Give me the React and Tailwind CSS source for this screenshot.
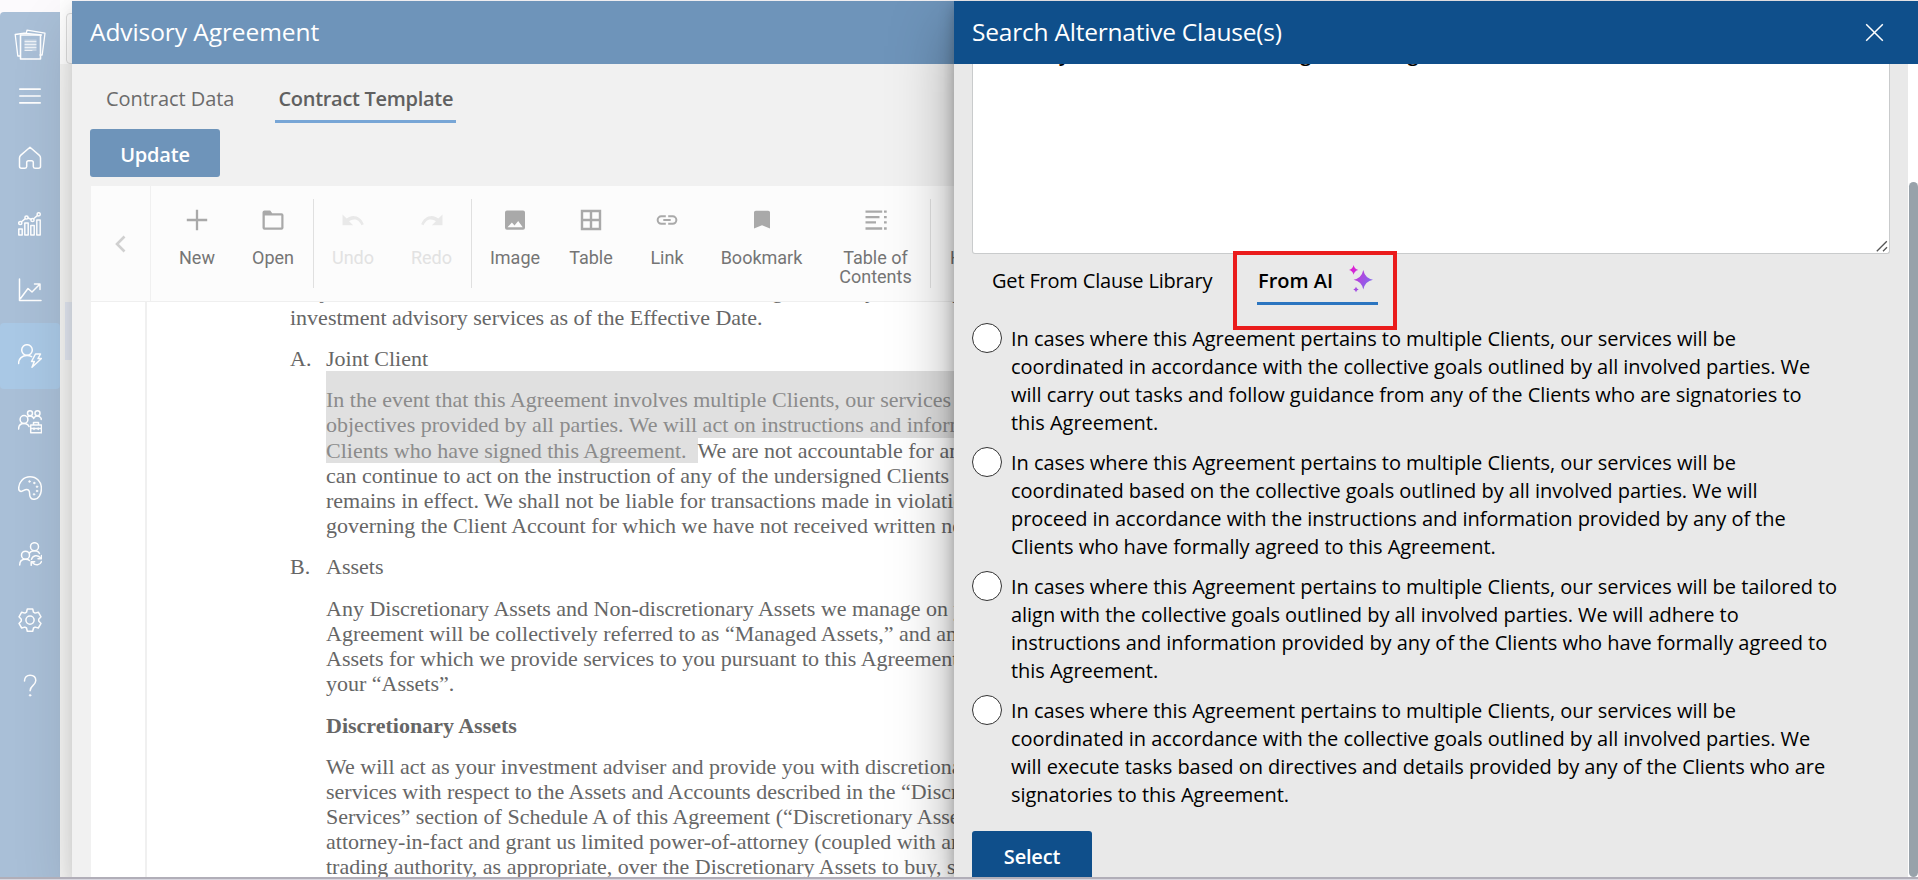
const stroke = { fill: 'none', stroke: 'currentColor', strokeLinecap: 'round', strokeLinejoin: 'round' };

function Ico({ children, size = 24, width = 1.5 }) {
  return (
    <svg width={size} height={size} viewBox="0 0 24 24" {...stroke} strokeWidth={width}>
      {children}
    </svg>
  );
}

const sideIcons = [
  <Ico key="home">
    <path d="M12 1.2 2.6 9.4Q1.5 10.4 1.5 12v8.3q0 2 2 2H7q1.700 0 1.700-1.700V16.500q0-1.800 1.800-1.800h3q1.800 0 1.800 1.800v4.100q0 1.700 1.700 1.700h3.500q2 0 2-2V12q0-1.600-1.100-2.600Z" />
  </Ico>,
  <Ico key="bars">
    <path d="M.8 23V17h3.400v6zM6.800 23V11h3.400v12zM12.800 23V13.500h3.400V23zM18.800 23V8h3.400v15z" />
    <circle cx="2.300" cy="11" r="1.600" />
    <circle cx="8.500" cy="5.500" r="1.600" />
    <circle cx="14.500" cy="8" r="1.600" />
    <circle cx="20.700" cy="2.300" r="1.600" />
    <path d="m3.500 9.800 3.800-3.200M10 6l3 1.300M15.600 6.800l4-3.400" />
  </Ico>,
  <Ico key="trend">
    <path d="M1.500 1v21.500H23M2.500 20.500l7.500-10 4 3.500 7.500-7.500M16.500 6h5.500v5.500" />
  </Ico>,
  <Ico key="bolt">
    <circle cx="9" cy="6" r="5.300" />
    <path d="M.6 19.500C.6 14.600 4.200 11.500 9 11.500q2.700 0 4.600 1.100" />
    <path d="M17.500 10h5l-2.500 4.500h3.500L14 23.300l2.300-5.800h-2.800z" />
  </Ico>,
  <Ico key="team">
    <circle cx="6" cy="9.500" r="3.900" />
    <circle cx="12" cy="3.300" r="2.500" />
    <circle cx="19.500" cy="3.300" r="2.500" />
    <path d="M.6 19c0-3.600 2-5.400 5.400-5.400 2.600 0 4.300 1 5 3M10 6.500q2-.9 4 0 1.300.8 1.700 2 .600-1.500 2-2.100 3.500-1.200 5.500 2v1.100" />
    <path d="M12.700 15h10.800v7.800H12.700zM15.500 15v-2.600h5V15M12.700 18.500h10.800M16 18v1.600M20.200 18v1.600" />
  </Ico>,
  <Ico key="palette">
    <path d="M12 .8C5.500.8.7 6 .7 12.500c0 2 1.100 2.900 2.500 2.900 2 0 3.200-1.900 5.300-1.900 2.300 0 3.100 1.700 3.100 4 0 3.300 1 5.800 4.400 5.800 4.600 0 7.400-5 7.400-10.800C23.400 5.600 18.500.8 12 .8z" />
    <g fill="currentColor" strokeWidth=".5">
      <circle cx="11.500" cy="5.500" r=".9" />
      <circle cx="16.300" cy="7" r=".9" />
      <circle cx="19" cy="10.700" r=".9" />
      <circle cx="19" cy="15" r=".9" />
      <circle cx="16" cy="18.300" r=".9" />
    </g>
  </Ico>,
  <Ico key="sync">
    <circle cx="16.500" cy="4.700" r="4" />
    <circle cx="7.500" cy="13.200" r="4" />
    <path d="M1.700 23c0-3.800 2-5.700 5.800-5.700 1.700 0 3 .300 4 1.200M11.500 11c.9-1.500 2.700-2.200 5-2.200 2.400 0 4.100.8 5 2.700M13.500 17.300c1.400-4 6-4.600 8.700-1.700M23.500 13.500v3.200h-3.500M23.500 19.500c-1.400 4-6 4.300-8.700 1.500M13.200 23.300v-3.500h3.500" />
  </Ico>,
  <Ico key="gear">
    <path d="M9.300 1h5.400l.8 3.200 1.600.9 3.200-.9 2.700 4.600-2.300 2.400v1.800l2.300 2.400-2.700 4.600-3.200-.9-1.600.9-.8 3.200H9.300l-.8-3.200-1.600-.9-3.200.9L1 15.400 3.300 13v-1.800L1 8.800l2.700-4.600 3.200.9 1.600-.9z" />
    <circle cx="12" cy="12.100" r="4.100" />
  </Ico>,
  <Ico key="help">
    <path d="M6.500 7c0-3.600 2.200-5.700 5.600-5.700s5.700 2.100 5.700 5.300c0 4.800-5.700 4.800-5.700 10.200" />
    <circle cx="12.100" cy="21.300" r=".9" fill="currentColor" strokeWidth=".6" />
  </Ico>,
];

function Sidebar() {
  return (
    <nav className="mt-3 flex w-[60px] shrink-0 flex-col items-center rounded-tl-sm bg-[#a9bfd7] text-white">
      <svg className="mt-[17px]" width="32" height="32" viewBox="0 0 32 32" {...stroke} strokeWidth="1.300">
        <path d="M6 27H3.800L1.200 5.500 12 4M26 26h2.200L31 4.200 13 1.200l-.6 3M12.400 4.300 27.500 6" />
        <rect x="6.500" y="6" width="20" height="24" strokeWidth="1.600" />
        <rect x="10.500" y="10.500" width="12" height="11.500" fill="#ffffff55" stroke="none" />
        <path d="M11 12.500h11M11 15.500h11M11 18.500h11M11 21.500h7" strokeWidth="1" opacity=".7" />
      </svg>
      <svg className="mt-[27px]" width="22" height="16" viewBox="0 0 22 16" {...stroke} strokeWidth="1.700">
        <path d="M.8 1.200h20.400M.8 8h20.400M.8 14.800h20.400" />
      </svg>
      <div className="mt-[20.500px] w-full">
        {sideIcons.map((icon, i) => (
          <div key={i} className={`flex h-[66px] w-full items-center justify-center ${i === 3 ? 'rounded bg-[#a9c8e5]' : ''}`}>
            {icon}
          </div>
        ))}
      </div>
    </nav>
  );
}

const icons = {
  New: <path d="M12 1.800v20.400M1.800 12h20.400" stroke="currentColor" strokeWidth="2.300" />,
  Open: (
    <path fillRule="evenodd" fill="currentColor" d="M3.500 2.500h5.700l2 2.800h9.300q2 0 2 2v12.400q0 2-2 2h-17q-2 0-2-2V4.500q0-2 2-2zM3.800 7.600v11.800h16.500V7.600z" />
  ),
  Undo: <path fill="currentColor" d="M1.500 6.500v10.700h10.600l-4-3.900c3.800-3 9.600-3 12.300 3.900l2.400-.9C20 8 11.500 5.400 5.700 10.500z" />,
  Redo: <path fill="currentColor" d="M22.500 6.500v10.700H11.900l4-3.900c-3.800-3-9.600-3-12.300 3.900l-2.400-.9C4 8 12.500 5.400 18.300 10.500z" />,
  Image: (
    <path fillRule="evenodd" fill="currentColor" d="M4 2.500h16q2 0 2 2v15.300q0 2-2 2H4q-2 0-2-2V4.500q0-2 2-2zM4.500 19.200h15.200L15.200 13l-3.700 4.600-2.600-3z" />
  ),
  Table: <path d="M3 3h18v18H3zM12 3v18M3 12h18" fill="none" stroke="currentColor" strokeWidth="2.400" />,
  Link: (
    <path fill="none" stroke="currentColor" strokeWidth="2" d="M10.800 8.300H6.400a3.700 3.700 0 0 0 0 7.500h4.400M13.200 8.300h4.400a3.700 3.700 0 0 1 0 7.500h-4.400M8.300 12h7.400" />
  ),
  Bookmark: <path fill="currentColor" d="M5.800 2.700h12.400q1.800 0 1.800 1.600v16.200l-8-3.300-8 3.300V4.300q0-1.600 1.800-1.600z" />,
  TOC: (
    <path d="M1.500 3.700h16.700M1.500 9.200h14M1.500 14.300h10.500M1.500 20.500h16.700M20 3.700h2.700M20 9.200h2.700M20 14.300h2.700M20 20.500h2.700" stroke="currentColor" strokeWidth="2.300" />
  ),
};

function Tool({ icon, label, className, disabled }) {
  return (
    <div className={`flex shrink-0 flex-col items-center pt-[22px] ${disabled ? 'text-[#e2e2e2]' : 'text-[#757575]'} ${className}`}>
      <svg width="24" height="24" viewBox="0 0 24 24" className={disabled ? 'text-[#e9e9e9]' : 'text-[#a9a9a9]'}>
        {icons[icon]}
      </svg>
      <div className="mt-4 text-center text-[18px] leading-[19px] whitespace-pre">{label}</div>
    </div>
  );
}

const Rule = ({ className = '' }) => <div className={`mt-[13px] h-[89px] w-px shrink-0 bg-[#e0e0e0] ${className}`} />;

function Toolbar() {
  return (
    <div className="flex h-[116px] shrink-0 border-b border-[#efefef] bg-[#fcfcfc] font-['Roboto',sans-serif]">
      <div className="flex w-[60px] shrink-0 items-center justify-center border-r border-[#f0f0f0] pr-[2px] text-[#d0d0d0]">
        <svg width="12" height="18" viewBox="0 0 12 18" fill="none" stroke="currentColor" strokeWidth="2.600">
          <path d="M10.500 1.500 3 9l7.500 7.500" />
        </svg>
      </div>
      <Tool icon="New" label="New" className="ml-2 w-[76px]" />
      <Tool icon="Open" label="Open" className="w-[76px]" />
      <Rule className="ml-[2px]" />
      <Tool icon="Undo" label="Undo" className="w-[78px]" disabled />
      <Tool icon="Redo" label="Redo" className="w-[79px]" disabled />
      <Rule />
      <Tool icon="Image" label="Image" className="w-[86px]" />
      <Tool icon="Table" label="Table" className="w-[66px]" />
      <Tool icon="Link" label="Link" className="w-[86px]" />
      <Tool icon="Bookmark" label="Bookmark" className="w-[103px]" />
      <Tool icon="TOC" label={'Table of\nContents'} className="w-[117px] pl-[8px]" />
      <Rule />
      <div className="pt-[62px] pl-[19px] text-[18px] leading-[19px] text-[#757575]">Header</div>
    </div>
  );
}

function Document() {
  return (
    <div className="flex min-h-0 flex-1 overflow-hidden bg-white">
      <div className="w-[56px] shrink-0 border-r-2 border-[#f0f0f0]" />
      <div className="-mt-[24px] ml-[143px] font-['Liberation_Serif',serif] text-[22px] leading-[25.200px] whitespace-nowrap text-[#666]">
        <p className="mb-[2px]">subject to the terms and conditions stated within this Agreement, you hereby retain us</p>
        <p>investment advisory services as of the Effective Date.</p>
        <div className="mt-[15.500px] flex">
          <span className="w-[36px]">A.</span>Joint Client
        </div>
        <div className="ml-[36px] w-[700px]">
          <p className="bg-[#e0e0e0] pt-[16px] text-[#8b8b8b]">In the event that this Agreement involves multiple Clients, our services will be</p>
          <p className="bg-[#e0e0e0] text-[#8b8b8b]">objectives provided by all parties. We will act on instructions and information</p>
          <p>
            <span className="inline-block bg-[#e0e0e0] pr-[11px] text-[#8b8b8b]">Clients who have signed this Agreement.</span>We are not
            accountable for any
          </p>
          <p>can continue to act on the instruction of any of the undersigned Clients until</p>
          <p>remains in effect. We shall not be liable for transactions made in violation</p>
          <p>governing the Client Account for which we have not received written notice</p>
        </div>
        <div className="mt-[16px] flex">
          <span className="w-[36px]">B.</span>Assets
        </div>
        <div className="mt-[16px] ml-[36px]">
          <p>Any Discretionary Assets and Non-discretionary Assets we manage on your</p>
          <p>Agreement will be collectively referred to as “Managed Assets,” and any</p>
          <p>Assets for which we provide services to you pursuant to this Agreement</p>
          <p>your “Assets”.</p>
          <p className="mt-[16.500px] font-bold">Discretionary Assets</p>
          <p className="mt-[15.500px]">We will act as your investment adviser and provide you with discretionary</p>
          <p>services with respect to the Assets and Accounts described in the “Discretionary</p>
          <p>Services” section of Schedule A of this Agreement (“Discretionary Assets”)</p>
          <p>attorney-in-fact and grant us limited power-of-attorney (coupled with an</p>
          <p>trading authority, as appropriate, over the Discretionary Assets to buy, sell</p>
        </div>
      </div>
    </div>
  );
}

function ContractPanel() {
  return (
    <section className="relative z-10 mt-px flex w-[882px] shrink-0 flex-col bg-[#f1f1f1] shadow-[0_25px_58px_rgba(0,0,0,0.14),0_5px_14px_rgba(0,0,0,0.11)]">
      <header className="flex h-[63px] shrink-0 items-center bg-[#6e94ba] pl-[18px] text-[24.500px] tracking-[-0.080px] text-white">
        Advisory Agreement
      </header>
      <div className="flex h-[59px] shrink-0 pt-[15px] pl-[34px] text-[20px] text-[#6b6b6b]">
        <div className="h-11 leading-[40px] tracking-[-0.060px]">Contract Data</div>
        <div className="ml-[41px] h-[44px] w-[181px] border-b-3 border-[#78a6d6] text-center leading-[40px] font-semibold tracking-[-0.300px] text-[#606060]">
          Contract Template
        </div>
      </div>
      <div className="mt-[6px] ml-[18px] flex h-12 w-[130px] shrink-0 items-center justify-center rounded-[3px] bg-[#6e94ba] pt-[3px] text-[20px] font-semibold tracking-[-0.200px] text-white">
        Update
      </div>
      <div className="mt-[9px] ml-[19px] flex min-h-0 flex-1 flex-col overflow-hidden">
        <Toolbar />
        <Document />
      </div>
    </section>
  );
}

const clauses = [
  [
    'In cases where this Agreement pertains to multiple Clients, our services will be',
    'coordinated in accordance with the collective goals outlined by all involved parties. We',
    'will carry out tasks and follow guidance from any of the Clients who are signatories to',
    'this Agreement.',
  ],
  [
    'In cases where this Agreement pertains to multiple Clients, our services will be',
    'coordinated based on the collective goals outlined by all involved parties. We will',
    'proceed in accordance with the instructions and information provided by any of the',
    'Clients who have formally agreed to this Agreement.',
  ],
  [
    'In cases where this Agreement pertains to multiple Clients, our services will be tailored to',
    'align with the collective goals outlined by all involved parties. We will adhere to',
    'instructions and information provided by any of the Clients who have formally agreed to',
    'this Agreement.',
  ],
  [
    'In cases where this Agreement pertains to multiple Clients, our services will be',
    'coordinated in accordance with the collective goals outlined by all involved parties. We',
    'will execute tasks based on directives and details provided by any of the Clients who are',
    'signatories to this Agreement.',
  ],
];

function Sparkles() {
  return (
    <svg width="24" height="28" viewBox="0 0 24 28">
      <defs>
        <linearGradient id="spark" gradientUnits="userSpaceOnUse" x1="0" y1="4" x2="24" y2="18">
          <stop offset="0" stopColor="#e815d0" />
          <stop offset=".55" stopColor="#a94be0" />
          <stop offset="1" stopColor="#7d6cf0" />
        </linearGradient>
      </defs>
      <g fill="url(#spark)">
        <path d="M14.300 5q1.700 8.200 9.700 9.700-8 1.500-9.700 9.700-1.700-8.200-9.700-9.700 8-1.500 9.700-9.700z" />
        <path d="M4.600 0q.8 4.100 4.700 4.900-3.900.8-4.700 4.900-.8-4.100-4.700-4.900 3.900-.8 4.700-4.900z" />
        <path d="M7 21.800q.5 2.300 2.700 2.700-2.200.5-2.700 2.700-.500-2.200-2.700-2.700 2.200-.4 2.700-2.700z" />
      </g>
    </svg>
  );
}

function ClausePanel() {
  return (
    <section className="relative z-20 mt-px flex w-[964px] shrink-0 flex-col bg-[#e9e9e9] shadow-[0_25px_58px_rgba(0,0,0,0.34),0_5px_14px_rgba(0,0,0,0.26)]">
      <header className="flex h-[63px] shrink-0 items-center justify-between bg-[#0f4f8b] pr-[34px] pl-[18px] text-[24.500px] tracking-[-0.220px] text-white">
        Search Alternative Clause(s)
        <svg width="19" height="19" viewBox="0 0 19 19" fill="none" stroke="currentColor" strokeWidth="1.500">
          <path d="m1.200 1.200 16.600 16.600M17.800 1.200 1.200 17.800" />
        </svg>
      </header>
      <div className="flex min-h-0 flex-1">
        <div className="flex flex-1 flex-col overflow-hidden pl-[18px]">
          <div className="flex h-[190px] w-[918px] shrink-0 items-end justify-between overflow-hidden rounded-b-[3px] border border-t-0 border-[#c9cbcc] bg-white">
            <p className="-mt-6 self-start pl-[20px] text-[20px] leading-[28px] font-semibold tracking-[0.350px] whitespace-nowrap text-black">
              Identify the alternative as being in a change
            </p>
            <svg className="mr-[1px] mb-[1px]" width="12" height="12" viewBox="0 0 12 12" stroke="#555" strokeWidth="1.300">
              <path d="M.8 11.200 10.800 1.200M7 11.200l4-4" />
            </svg>
          </div>
          <div className="relative flex h-[66px] shrink-0 pl-[20px] text-[20px] text-black">
            <div className="w-[265px] pt-[7px] leading-[40px] tracking-[-0.180px]">Get From Clause Library</div>
            <div className="flex h-[51px] w-[121px] justify-between border-b-3 border-[#2b75c0] pr-[5px] pl-px">
              <span className="pt-[7px] leading-[40px] font-semibold">From AI</span>
              <span className="pt-[11px]">
                <Sparkles />
              </span>
            </div>
            <div className="absolute -top-[3px] left-[261px] h-[79px] w-[164px] border-[4.500px] border-[#ea1c1c]" />
          </div>
          <div className="flex flex-col gap-[7px]">
            {clauses.map((lines, i) => (
              <label key={i} className="flex gap-[9px]">
                <span className="mt-[3px] size-[30px] shrink-0 rounded-full border border-[#333] bg-white" />
                <span className="pt-[5px] text-[20px] leading-[28px] tracking-[-0.040px] whitespace-nowrap text-black">
                  {lines.map((l) => (
                    <span key={l} className="block">
                      {l}
                    </span>
                  ))}
                </span>
              </label>
            ))}
          </div>
          <div className="mt-[22px] flex h-[49px] w-[120px] shrink-0 items-center justify-center rounded-[3px] bg-[#0f4f8b] pt-[3px] text-[20px] font-semibold tracking-[-0.200px] text-white">
            Select
          </div>
        </div>
        <div className="flex w-[10px] shrink-0 flex-col bg-white pl-px">
          <div className="mt-[118px] flex-1 rounded-full bg-[#98a2aa]" />
        </div>
      </div>
    </section>
  );
}

export default function App() {
  return (
    <div className="flex h-[880px] w-[1918px] flex-col overflow-hidden bg-[#fcfafd] font-['Open_Sans',sans-serif]">
      <div className="flex h-[877px] shrink-0 overflow-hidden">
        <Sidebar />
        <div className="flex w-3 shrink-0 flex-col bg-white pt-[13px] pl-[6px]">
          <div className="h-[51px] w-3 rounded-l border border-[#ddd] bg-white" />
          <div className="-ml-[6px] flex-1 bg-[#f5f5f4] pt-[238px] pl-[5px]">
            <div className="h-[58px] bg-[#e3e8f2]" />
          </div>
        </div>
        <ContractPanel />
        <ClausePanel />
      </div>
      <div className="h-[3px] border-t-2 border-[#b1aeb8] bg-[#d9d7e0]" />
    </div>
  );
}
